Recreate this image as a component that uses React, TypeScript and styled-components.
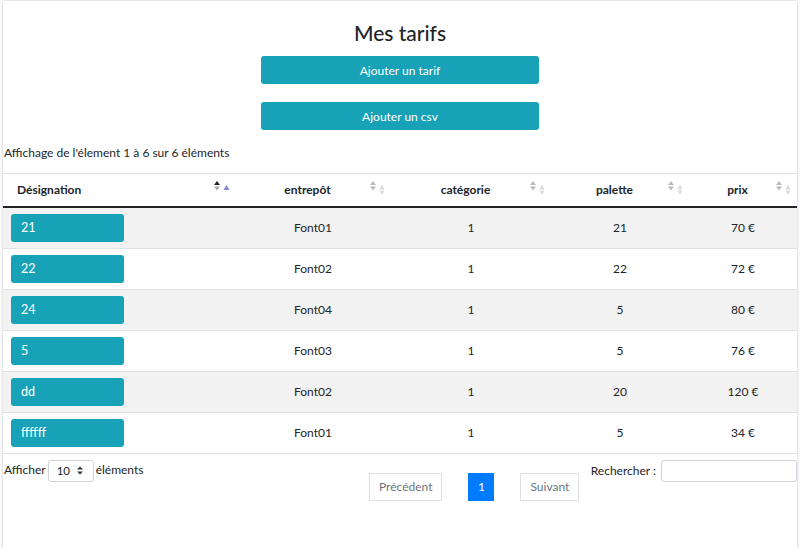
import styled, { createGlobalStyle } from 'styled-components';

const GlobalStyle = createGlobalStyle`
    body {
        margin: 0;
        background: #ffffff;
        font-family: Lato, "Open Sans", sans-serif;
        color: #212529;
    }
`
const Card = styled.div`
    margin: 1px 4px 0 3px;
    height: 548px;
    background: #ffffff;
    box-shadow: 0 0 3px rgba(0, 0, 0, 0.25);
    display: flex;
    flex-direction: column;
`
const Header = styled.div`
    display: flex;
    flex-direction: column;
    align-items: center;
    padding-top: 17px;
`
const Title = styled.h2`
    font-size: 21px;
    font-weight: 500;
    margin: 0 0 9px;
    line-height: 29px;
`
const ActionButton = styled.button`
    width: 278px;
    height: 28px;
    border: none;
    border-radius: 3px;
    background: #17a2b8;
    color: #ffffff;
    font-family: inherit;
    font-size: 12px;
    margin-bottom: 18px;
`
const Info = styled.div`
    font-size: 12px;
    padding-left: 1px;
    margin-top: -3px;
    height: 28px;
    line-height: 16px;
`
const Table = styled.table`
    width: 100%;
    table-layout: fixed;
    border-collapse: collapse;
    font-size: 12px;
`
const Th = styled.th<{ $w: number; $left?: boolean }>`
    position: relative;
    width: ${p => p.$w}px;
    height: 33px;
    padding: 0 23px 0 ${p => (p.$left ? 14 : 12)}px;
    text-align: ${p => (p.$left ? 'left' : 'center')};
    font-weight: 700;
    border-top: 1px solid #dee2e6;
    border-bottom: 2px solid #212529;
    box-sizing: border-box;
`
const SortIcon = styled.svg`
    position: absolute;
    right: 3px;
    top: 7px;
`
const Row = styled.tr<{ $odd: boolean }>`
    background: ${p => (p.$odd ? '#f2f2f2' : '#ffffff')};
    border-bottom: 1px solid #dee2e6;
`
const Td = styled.td<{ $left?: boolean }>`
    height: 40px;
    padding: 0 10px;
    text-align: ${p => (p.$left ? 'left' : 'center')};
`
const NameButton = styled.span`
    display: flex;
    align-items: center;
    width: 103px;
    height: 28px;
    margin-left: -2px;
    padding-left: 10px;
    border-radius: 3px;
    background: #17a2b8;
    color: #ffffff;
    font-size: 12.5px;
`
const Footer = styled.div`
    display: flex;
    align-items: flex-start;
    padding-top: 6px;
    font-size: 12px;
`
const Length = styled.div`
    width: 365px;
    display: flex;
    align-items: flex-start;
    gap: 2px;
    padding-left: 1px;
    line-height: 20px;
    white-space: nowrap;
`
const Select = styled.div`
    display: flex;
    align-items: center;
    justify-content: space-between;
    padding: 0 10px 0 8px;
    box-sizing: border-box;
    width: 46px;
    height: 22px;
    border: 1px solid #ced4da;
    border-radius: 3px;
    font-size: 11.5px;
`
const Pagination = styled.div`
    display: flex;
    gap: 26px;
    margin-top: 13px;
`
const PageButton = styled.div<{ $active?: boolean }>`
    height: 28px;
    min-width: 26px;
    padding: 0 ${p => (p.$active ? 0 : 9)}px;
    box-sizing: border-box;
    display: flex;
    align-items: center;
    justify-content: center;
    border: 1px solid ${p => (p.$active ? '#007bff' : '#dee2e6')};
    background: ${p => (p.$active ? '#007bff' : '#ffffff')};
    color: ${p => (p.$active ? '#ffffff' : '#6c757d')};
`
const Search = styled.div`
    margin-left: auto;
    display: flex;
    align-items: flex-start;
    gap: 5px;
    line-height: 22px;
    white-space: nowrap;
`
const SearchInput = styled.div`
    width: 136px;
    height: 22px;
    box-sizing: border-box;
    border: 1px solid #ced4da;
    border-radius: 3px;
`

function Sort({ active }: { active?: boolean }) {
    return (
        <SortIcon width="18" height="16" viewBox="0 0 18 16">
            <polygon points="0,4 3,0 6,4" fill={active ? '#222' : '#b8b8c0'} />
            <polygon points="0,5.5 3,9.5 6,5.5" fill={active ? '#a8a8ad' : '#b8b8c0'} />
            {active ? (
                <polygon points="9.5,9 12.5,4 15.5,9" fill="#8484d8" />
            ) : (
                <>
                    <polygon points="9.5,8.5 12,3.5 14.5,8.5" fill="#dcdcdc" />
                    <polygon points="9.5,9.5 12,14 14.5,9.5" fill="#dcdcdc" />
                </>
            )}
        </SortIcon>
    )
}

const rows = [
    ['21', 'Font01', '1', '21', '70 €'],
    ['22', 'Font02', '1', '22', '72 €'],
    ['24', 'Font04', '1', '5', '80 €'],
    ['5', 'Font03', '1', '5', '76 €'],
    ['dd', 'Font02', '1', '20', '120 €'],
    ['ffffff', 'Font01', '1', '5', '34 €'],
];

function App() {
    return (
        <>
            <GlobalStyle />
            <Card>
                <Header>
                    <Title>Mes tarifs</Title>
                    <ActionButton>Ajouter un tarif</ActionButton>
                    <ActionButton>Ajouter un csv</ActionButton>
                </Header>
                <Info>Affichage de l'élement 1 à 6 sur 6 éléments</Info>
                <Table>
                    <thead>
                        <tr>
                            <Th $w={232} $left>Désignation<Sort active /></Th>
                            <Th $w={156}>entrepôt<Sort /></Th>
                            <Th $w={160}>catégorie<Sort /></Th>
                            <Th $w={138}>palette<Sort /></Th>
                            <Th $w={108}>prix<Sort /></Th>
                        </tr>
                    </thead>
                    <tbody>
                        {rows.map((r, i) => (
                            <Row key={i} $odd={i % 2 === 0}>
                                <Td $left><NameButton>{r[0]}</NameButton></Td>
                                <Td>{r[1]}</Td>
                                <Td>{r[2]}</Td>
                                <Td>{r[3]}</Td>
                                <Td>{r[4]}</Td>
                            </Row>
                        ))}
                    </tbody>
                </Table>
                <Footer>
                    <Length>
                        Afficher
                        <Select>
                            10
                            <svg width="6" height="9" viewBox="0 0 6 9">
                                <polygon points="0,3.5 3,0.5 6,3.5" fill="#333" />
                                <polygon points="0,5.5 3,8.5 6,5.5" fill="#333" />
                            </svg>
                        </Select>
                        éléments
                    </Length>
                    <Pagination>
                        <PageButton>Précédent</PageButton>
                        <PageButton $active>1</PageButton>
                        <PageButton>Suivant</PageButton>
                    </Pagination>
                    <Search>
                        Rechercher :
                        <SearchInput />
                    </Search>
                </Footer>
            </Card>
        </>
    )
}

export default App;
